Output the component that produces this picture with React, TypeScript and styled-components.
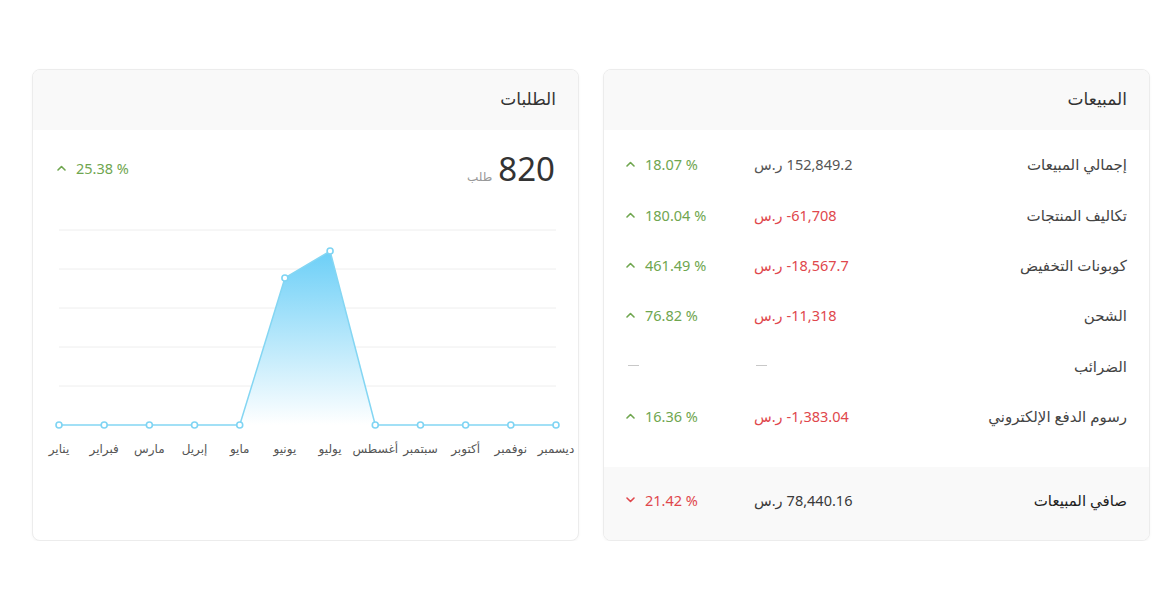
import * as React from 'react'
import styled, { createGlobalStyle } from 'styled-components'

const GlobalStyle = createGlobalStyle`
  html, body {
    margin: 0;
    padding: 0;
    background: #fff;
  }
  body {
    font-family: "Noto Sans", "Open Sans", "DejaVu Sans", sans-serif;
    color: #444;
  }
`

const Page = styled.div`
  direction: rtl;
  display: grid;
  grid-template-columns: 1fr 1fr;
  gap: 24px;
  padding: 69px 20px 0 32px;
  width: 1170px;
  box-sizing: border-box;
`

const Card = styled.section`
  height: 472px;
  border: 1px solid #ececec;
  border-radius: 8px;
  background: #fff;
  box-shadow: 0 1px 3px rgba(0, 0, 0, 0.04);
  display: flex;
  flex-direction: column;
  overflow: hidden;
  box-sizing: border-box;
`

const Header = styled.header`
  height: 60px;
  flex: none;
  display: flex;
  align-items: center;
  padding: 0 22px 3px;
  box-sizing: border-box;
  background: #f9f9f9;
`

const Title = styled.h2`
  margin: 0;
  font-size: 17px;
  font-weight: 400;
  color: #333;
`

const Body = styled.div`
  padding: 9px 22px 0;
  flex: 1;
`

const Row = styled.div`
  display: grid;
  grid-template-columns: 1fr 110px 128px;
  align-items: center;
  height: 50.4px;
`

const Label = styled.span<{ strong?: boolean }>`
  font-size: 15px;
  white-space: nowrap;
  color: ${p => (p.strong ? '#222' : '#444')};
`

const Value = styled.span<{ tone?: 'neg' | 'plain' | 'strong' }>`
  direction: ltr;
  justify-self: end;
  display: flex;
  align-items: center;
  gap: 4px;
  white-space: nowrap;
  font-size: 14.5px;
  color: ${p => (p.tone === 'neg' ? '#e0474c' : p.tone === 'strong' ? '#3a3a3a' : '#555')};
`

const Dash = styled.span`
  justify-self: end;
  width: 11px;
  height: 1px;
  margin-left: 2px;
  background: #c8c8c8;
`

const Change = styled.span<{ down?: boolean }>`
  direction: ltr;
  justify-self: end;
  display: flex;
  align-items: center;
  gap: 10px;
  white-space: nowrap;
  font-size: 14.5px;
  color: ${p => (p.down ? '#e0474c' : '#6fa64f')};
`

const Footer = styled.footer`
  flex: none;
  height: 73px;
  padding: 0 22px 6px;
  box-sizing: border-box;
  background: #f9f9f9;
  display: flex;
  flex-direction: column;
  justify-content: center;
`

const OrdersBody = styled.div`
  padding: 18px 22px 0 20px;
`

const StatRow = styled.div`
  display: flex;
  justify-content: space-between;
  align-items: center;
  height: 40px;
  padding: 0 1px 0 4px;
`

const Count = styled.div`
  display: flex;
  align-items: baseline;
  gap: 6px;
`

const Big = styled.span`
  font-size: 33px;
  color: #333;
  line-height: 1;
`

const Unit = styled.span`
  font-size: 12px;
  color: #999;
`

const ChartBox = styled.div`
  margin-top: 32px;
  direction: ltr;
`

const ChartSvg = styled.svg`
  display: block;
  overflow: visible;
`

function Chevron({ down }: { down?: boolean }) {
  return (
    <svg width="9" height="6" viewBox="0 0 9 6">
      <polyline
        points={down ? '1,1 4.5,4.5 8,1' : '1,5 4.5,1.5 8,5'}
        fill="none"
        stroke="currentColor"
        strokeWidth="1.6"
        strokeLinecap="round"
        strokeLinejoin="round"
      />
    </svg>
  )
}

function Money({ amount, tone }: { amount: string; tone: 'neg' | 'plain' | 'strong' }) {
  return (
    <Value tone={tone}>
      <span>ر.س</span>
      <span>{amount}</span>
    </Value>
  )
}

interface SaleRow {
  label: string
  value?: string
  neg?: boolean
  change?: string
}

const rows: SaleRow[] = [
  { label: 'إجمالي المبيعات', value: '152,849.2', change: '18.07' },
  { label: 'تكاليف المنتجات', value: '-61,708', neg: true, change: '180.04' },
  { label: 'كوبونات التخفيض', value: '-18,567.7', neg: true, change: '461.49' },
  { label: 'الشحن', value: '-11,318', neg: true, change: '76.82' },
  { label: 'الضرائب' },
  { label: 'رسوم الدفع الإلكتروني', value: '-1,383.04', neg: true, change: '16.36' },
]

const months = ['يناير', 'فبراير', 'مارس', 'إبريل', 'مايو', 'يونيو', 'يوليو', 'أغسطس', 'سبتمبر', 'أكتوبر', 'نوفمبر', 'ديسمبر']
const orders = [0, 0, 0, 0, 0, 377, 446, 0, 0, 0, 0, 0]

function OrdersChart() {
  const w = 509
  const top = 10
  const base = 205
  const max = 500
  const x0 = 6
  const step = (w - 12) / 11
  const pts = orders.map((v, i) => ({ x: x0 + i * step, y: base - (v / max) * (base - top) }))
  const line = pts.map(p => `${p.x},${p.y}`).join(' ')
  const area = `${pts[0].x},${base} ${line} ${pts[11].x},${base}`

  return (
    <ChartSvg width={w} height={250} viewBox={`0 0 ${w} 250`}>
      <defs>
        <linearGradient id="ordersFill" x1="0" y1="0" x2="0" y2="1">
          <stop offset="0" stopColor="#6ccff7" />
          <stop offset="1" stopColor="#ffffff" />
        </linearGradient>
      </defs>
      {[0, 1, 2, 3, 4].map(i => (
        <line key={i} x1={x0} x2={w - 6} y1={top + i * 39} y2={top + i * 39} stroke="#eeeeee" strokeWidth="1" />
      ))}
      <polygon points={area} fill="url(#ordersFill)" />
      <polyline points={line} fill="none" stroke="#84d6f3" strokeWidth="1.5" strokeLinejoin="round" />
      {pts.map((p, i) => (
        <circle key={i} cx={p.x} cy={p.y} r="3" fill="#fff" stroke="#7fd4f3" strokeWidth="1.6" />
      ))}
      {pts.map((p, i) => (
        <text
          key={months[i]}
          x={p.x}
          y={base + 28}
          textAnchor="middle"
          fontSize="12"
          fill="#555"
          fontFamily='"Noto Sans", "DejaVu Sans", sans-serif'
        >
          {months[i]}
        </text>
      ))}
    </ChartSvg>
  )
}

export default function App() {
  return (
    <>
      <GlobalStyle />
      <Page>
        <Card>
          <Header>
            <Title>المبيعات</Title>
          </Header>
          <Body>
            {rows.map(r => (
              <Row key={r.label}>
                <Label>{r.label}</Label>
                {r.value ? <Money amount={r.value} tone={r.neg ? 'neg' : 'plain'} /> : <Dash />}
                {r.change ? (
                  <Change>
                    <Chevron />
                    {r.change} %
                  </Change>
                ) : (
                  <Dash />
                )}
              </Row>
            ))}
          </Body>
          <Footer>
            <Row>
              <Label strong>صافي المبيعات</Label>
              <Money amount="78,440.16" tone="strong" />
              <Change down>
                <Chevron down />
                21.42 %
              </Change>
            </Row>
          </Footer>
        </Card>
        <Card>
          <Header>
            <Title>الطلبات</Title>
          </Header>
          <OrdersBody>
            <StatRow>
              <Count>
                <Big>820</Big>
                <Unit>طلب</Unit>
              </Count>
              <Change>
                <Chevron />
                25.38 %
              </Change>
            </StatRow>
            <ChartBox>
              <OrdersChart />
            </ChartBox>
          </OrdersBody>
        </Card>
      </Page>
    </>
  )
}
